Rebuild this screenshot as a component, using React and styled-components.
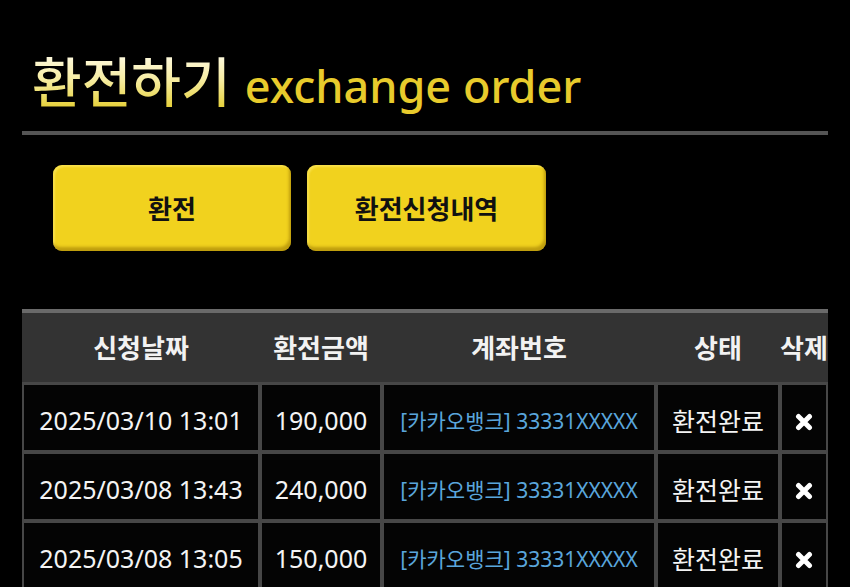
import React from "react";
import styled, { createGlobalStyle } from "styled-components";

const GlobalStyle = createGlobalStyle`
  html, body { margin: 0; padding: 0; background: #000; }
  body {
    font-family: "Noto Sans", "Noto Sans CJK KR", sans-serif;
    color: #fff;
    overflow: hidden;
  }
`;

const Page = styled.div`
  width: 850px;
  height: 587px;
  background: #000;
  padding: 0 22px;
  box-sizing: border-box;
  overflow: hidden;
`;

const TitleRow = styled.h1`
  margin: 0;
  padding: 53px 0 0 10px;
  height: 131px;
  box-sizing: border-box;
  display: flex;
  align-items: baseline;
  gap: 14px;
  font-weight: 500;
  line-height: 1;
`;

const TitleKo = styled.span`
  font-family: "Noto Sans CJK KR", sans-serif;
  font-size: 54px;
  font-weight: 500;
  background: linear-gradient(180deg, #fffbe6 0%, #f6eca0 50%, #e6d13c 100%);
  -webkit-background-clip: text;
  background-clip: text;
  color: transparent;
`;

const TitleEn = styled.span`
  font-family: "Noto Sans", sans-serif;
  font-size: 45px;
  font-weight: 500;
  color: #e8cb2c;
`;

const Divider = styled.hr`
  margin: 0;
  border: none;
  height: 4px;
  background: #555;
`;

const ButtonRow = styled.div`
  display: flex;
  gap: 16px;
  padding: 30px 0 0 31px;
`;

const TabButton = styled.button`
  width: ${(p) => p.$w}px;
  height: 86px;
  border: none;
  border-radius: 9px;
  background: #f1d21e;
  box-shadow: inset -2px -4px 3px rgba(150, 115, 0, 0.55), inset 2px 2px 2px rgba(255, 240, 120, 0.5);
  font-family: "Noto Sans CJK KR", sans-serif;
  font-weight: 700;
  font-size: 26px;
  color: #111;
  cursor: pointer;
  padding: 0 0 2px;
`;

const Table = styled.div`
  margin-top: 58px;
`;

const cols = "234px 118px 270px 120px 44px";

const HeaderRow = styled.div`
  display: grid;
  grid-template-columns: ${cols};
  column-gap: 4px;
  padding: 0 2px;
  height: 69px;
  background: #333;
  border-top: 4px solid #6a6a6a;
`;

const HeadCell = styled.div`
  display: flex;
  align-items: center;
  justify-content: center;
  white-space: nowrap;
  font-family: "Noto Sans CJK KR", sans-serif;
  font-weight: 700;
  font-size: 26px;
  color: #f2f2f2;
  padding-bottom: 2px;
`;

const Body = styled.div`
  display: grid;
  grid-template-columns: ${cols};
  grid-auto-rows: 65px;
  gap: 4px;
  padding: 3px 2px;
  background: #474747;
`;

const Cell = styled.div`
  background: #040404;
  display: flex;
  align-items: center;
  justify-content: center;
  white-space: nowrap;
  font-size: ${(p) => (p.$small ? 21 : 25)}px;
  color: ${(p) => (p.$blue ? "#5aa6dc" : "#f4f4f4")};
  padding-top: ${(p) => (p.$icon ? 8 : 4)}px;
  box-sizing: border-box;
`;

const XIcon = () => (
  <svg width="18" height="18" viewBox="0 0 18 18" aria-hidden="true">
    <path d="M3.5 3.5 L14.5 14.5 M14.5 3.5 L3.5 14.5" stroke="#fff" strokeWidth="5" strokeLinecap="round" />
  </svg>
);

const rows = [
  ["2025/03/10 13:01", "190,000"],
  ["2025/03/08 13:43", "240,000"],
  ["2025/03/08 13:05", "150,000"],
];

export default function App() {
  return (
    <>
      <GlobalStyle />
      <Page>
        <TitleRow>
          <TitleKo>환전하기</TitleKo>
          <TitleEn>exchange order</TitleEn>
        </TitleRow>
        <Divider />
        <ButtonRow>
          <TabButton $w={238}>환전</TabButton>
          <TabButton $w={239}>환전신청내역</TabButton>
        </ButtonRow>
        <Table>
          <HeaderRow>
            <HeadCell>신청날짜</HeadCell>
            <HeadCell>환전금액</HeadCell>
            <HeadCell>계좌번호</HeadCell>
            <HeadCell>상태</HeadCell>
            <HeadCell>삭제</HeadCell>
          </HeaderRow>
          <Body>
            {rows.map(([d, a], i) => (
              <React.Fragment key={i}>
                <Cell>{d}</Cell>
                <Cell>{a}</Cell>
                <Cell $blue $small>[카카오뱅크] 33331XXXXX</Cell>
                <Cell>환전완료</Cell>
                <Cell $icon>
                  <XIcon />
                </Cell>
              </React.Fragment>
            ))}
          </Body>
        </Table>
      </Page>
    </>
  );
}
